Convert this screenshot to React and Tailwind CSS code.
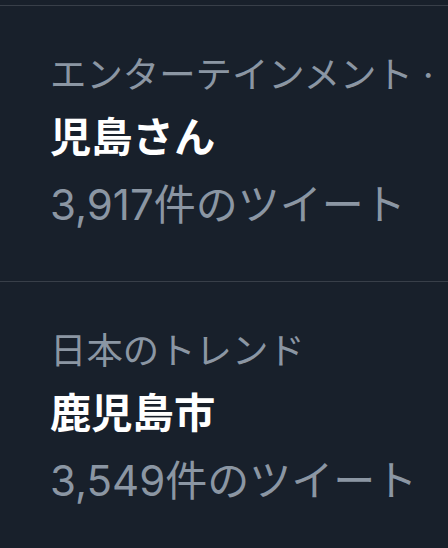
import React from "react";

const trends = [
    { category: "エンターテインメント ·", name: "児島さん", count: "3,917件のツイート" },
    { category: "日本のトレンド", name: "鹿児島市", count: "3,549件のツイート" },
];

function TrendItem({ category, name, count }) {
    return (
        <div className="border-t border-[#383f49] pl-[50px] pt-[39px] pb-[40px] overflow-hidden">
            <div className="text-[36.4px] leading-[60px] text-[#8b96a3] whitespace-nowrap">{category}</div>
            <div className="text-[41.3px] leading-[64px] font-bold text-white whitespace-nowrap">{name}</div>
            <div className="text-[42px] leading-[72px] text-[#8b96a3] whitespace-nowrap">{count}</div>
        </div>
    );
}

export default function App() {
    return (
        <div
            className="w-[448px] h-[548px] bg-[#18202b] pt-[5px] overflow-hidden"
            style={{ fontFamily: 'Inter, "Noto Sans CJK JP", sans-serif' }}
        >
            {trends.map((t) => (
                <TrendItem key={t.name} {...t} />
            ))}
        </div>
    );
}
